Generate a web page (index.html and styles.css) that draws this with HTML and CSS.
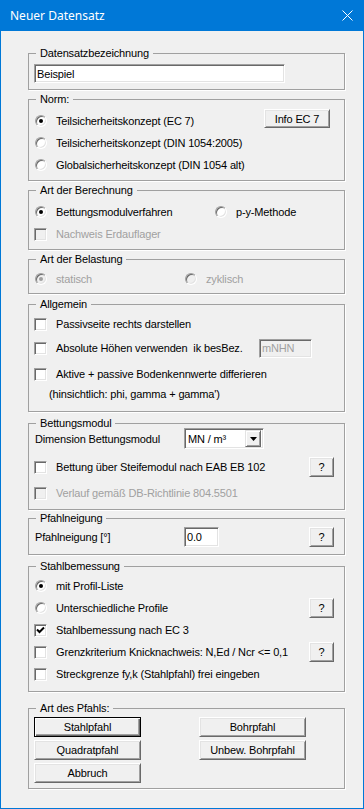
FILE: index.html
```html
<!DOCTYPE html>
<html lang="de">
<head>
  <meta charset="UTF-8">
  <title>Neuer Datensatz</title>
  <link rel="stylesheet" href="styles.css">
</head>
<body>
  <div class="window">
    <div class="titlebar">
      <span class="title">Neuer Datensatz</span>
      <svg class="close" width="11" height="11" viewBox="0 0 11 11"><path d="M0.5 0.5L10.5 10.5M10.5 0.5L0.5 10.5" stroke="#fff" stroke-width="1"/></svg>
    </div>

    <div class="client">
      <!-- Bezeichnung -->
      <fieldset class="grp grp-name">
        <legend>Datensatzbezeichnung</legend>
        <div class="body">
          <input class="field field-name" type="text" value="Beispiel">
        </div>
      </fieldset>

      <!-- Norm -->
      <fieldset class="grp grp-norm">
        <legend>Norm:</legend>
        <div class="body">
          <div class="row">
            <span class="opt"><span class="radio on"></span>Teilsicherheitskonzept (EC 7)</span>
            <button class="btn btn-info">Info EC 7</button>
          </div>
          <div class="row"><span class="opt"><span class="radio"></span>Teilsicherheitskonzept (DIN 1054:2005)</span></div>
          <div class="row"><span class="opt"><span class="radio"></span>Globalsicherheitskonzept (DIN 1054 alt)</span></div>
        </div>
      </fieldset>

      <!-- Berechnung -->
      <fieldset class="grp grp-ber">
        <legend>Art der Berechnung</legend>
        <div class="body">
          <div class="row">
            <span class="opt col-ber"><span class="radio on"></span>Bettungsmodulverfahren</span>
            <span class="opt"><span class="radio"></span>p-y-Methode</span>
          </div>
          <div class="row"><span class="opt off"><span class="chk"></span>Nachweis Erdauflager</span></div>
        </div>
      </fieldset>

      <!-- Belastung -->
      <fieldset class="grp grp-bel">
        <legend>Art der Belastung</legend>
        <div class="body">
          <div class="row">
            <span class="opt off col-bel"><span class="radio on"></span>statisch</span>
            <span class="opt off"><span class="radio"></span>zyklisch</span>
          </div>
        </div>
      </fieldset>

      <!-- Allgemein -->
      <fieldset class="grp grp-allg">
        <legend>Allgemein</legend>
        <div class="body">
          <div class="row"><span class="opt"><span class="chk"></span>Passivseite rechts darstellen</span></div>
          <div class="row row-26">
            <span class="opt col-abs"><span class="chk"></span>Absolute Höhen verwenden&nbsp; ik besBez.</span>
            <input class="field field-nhn" type="text" value="mNHN" disabled>
          </div>
          <div class="row row-26"><span class="opt"><span class="chk"></span>Aktive + passive Bodenkennwerte differieren</span></div>
          <div class="row row-14"><span class="note">(hinsichtlich: phi, gamma + gamma')</span></div>
        </div>
      </fieldset>

      <!-- Bettungsmodul -->
      <fieldset class="grp grp-bett">
        <legend>Bettungsmodul</legend>
        <div class="body">
          <div class="row row-21">
            <span class="lbl">Dimension Bettungsmodul</span>
            <div class="combo">
              <span class="combo-text">MN / m³</span>
              <span class="drop"><svg width="7" height="4" viewBox="0 0 7 4"><path d="M0 0H7L3.5 4Z" fill="#000"/></svg></span>
            </div>
          </div>
          <div class="row row-gap">
            <span class="opt"><span class="chk"></span>Bettung über Steifemodul nach EAB EB 102</span>
            <button class="btn btn-q">?</button>
          </div>
          <div class="row row-gap2"><span class="opt off"><span class="chk"></span>Verlauf gemäß DB-Richtlinie 804.5501</span></div>
        </div>
      </fieldset>

      <!-- Pfahlneigung -->
      <fieldset class="grp grp-pfahl">
        <legend>Pfahlneigung</legend>
        <div class="body">
          <div class="row row-20">
            <span class="lbl">Pfahlneigung [°]</span>
            <input class="field field-neig" type="text" value="0.0">
            <button class="btn btn-q">?</button>
          </div>
        </div>
      </fieldset>

      <!-- Stahlbemessung -->
      <fieldset class="grp grp-stahl">
        <legend>Stahlbemessung</legend>
        <div class="body">
          <div class="row"><span class="opt"><span class="radio on"></span>mit Profil-Liste</span></div>
          <div class="row">
            <span class="opt"><span class="radio"></span>Unterschiedliche Profile</span>
            <button class="btn btn-q">?</button>
          </div>
          <div class="row">
            <span class="opt"><span class="chk"><svg width="9" height="9" viewBox="0 0 9 9"><path d="M1 3.5L3.5 6L8 1.5" fill="none" stroke="#000" stroke-width="2"/></svg></span>Stahlbemessung nach EC 3</span>
          </div>
          <div class="row">
            <span class="opt"><span class="chk"></span>Grenzkriterium Knicknachweis: N,Ed / Ncr &lt;= 0,1</span>
            <button class="btn btn-q">?</button>
          </div>
          <div class="row"><span class="opt"><span class="chk"></span>Streckgrenze fy,k (Stahlpfahl) frei eingeben</span></div>
        </div>
      </fieldset>

      <!-- Art des Pfahls -->
      <fieldset class="grp grp-art">
        <legend>Art des Pfahls:</legend>
        <div class="body">
          <div class="btn-grid">
            <button class="btn btn-big default">Stahlpfahl</button>
            <button class="btn btn-big">Bohrpfahl</button>
            <button class="btn btn-big">Quadratpfahl</button>
            <button class="btn btn-big">Unbew. Bohrpfahl</button>
            <button class="btn btn-big">Abbruch</button>
          </div>
        </div>
      </fieldset>
    </div>
  </div>
</body>
</html>
```

FILE: styles.css
```css
body {
  margin: 0;
  font-family: "Liberation Sans", Arial, sans-serif;
  font-size: 11px;
  letter-spacing: -0.15px;
  color: #000;
}
.window {
  width: 364px;
  height: 809px;
  box-sizing: border-box;
  border: 1px solid #0078d7;
  border-top: 0;
  background: #f0f0f0;
}
.titlebar {
  height: 31px;
  background: #0078d7;
  display: flex;
  align-items: center;
  justify-content: space-between;
  padding: 0 10px 0 9px;
}
.title {
  font-family: "Noto Sans", "Open Sans", sans-serif;
  font-size: 12px;
  letter-spacing: 0;
  color: #fff;
  margin-top: -1px;
}
.client {
  padding: 18px 0 0 27px;
}

/* Gruppenrahmen */
.grp {
  margin: 0;
  padding: 0;
  min-width: 0;
  width: 317px;
  box-sizing: border-box;
  border: 1px solid #a0a0a0;
  box-shadow: 1px 1px 0 #fff;
}
.grp legend {
  padding: 0 4px;
  margin-left: 7px;
  line-height: 9px;
}
.body {
  display: flex;
  flex-direction: column;
  padding: 4px 10px 0 5px;
}
.grp-name { height: 41px; }
.grp-name .body { padding-top: 6px; }
.grp-norm { height: 86px; margin-top: 5px; }
.grp-norm .body { padding-top: 6px; }
.grp-ber { height: 64px; margin-top: 5px; }
.grp-ber .body { padding-top: 6px; }
.grp-bel { height: 39px; margin-top: 5px; }
.grp-allg { height: 112px; margin-top: 6px; }
.grp-bett { height: 91px; margin-top: 7px; }
.grp-bett .body { padding-top: 0; }
.grp-pfahl { height: 41px; margin-top: 4px; }
.grp-stahl { height: 130px; margin-top: 7px; }
.grp-art { height: 85px; margin-top: 12px; }

/* Zeilen */
.row {
  display: flex;
  align-items: center;
  height: 22px;
}
.row-26 { height: 26px; }
.row-14 { height: 14px; }
.row-21 { height: 21px; }
.row-20 { height: 20px; }
.row-gap { margin-top: 6px; height: 24px; }
.row-gap2 { margin-top: 3px; }
.opt {
  display: flex;
  align-items: center;
  white-space: nowrap;
}
.opt.off { color: #a0a0a0; }
.col-ber { width: 180px; }
.col-bel { width: 150px; }
.col-abs { width: 225px; }
.lbl {
  width: 150px;
  padding-left: 1px;
  box-sizing: border-box;
}
.note { padding-left: 15px; }

/* Optionsfeld + Kontrollkästchen */
.radio, .chk {
  box-sizing: border-box;
  flex: none;
  background: #fff;
  border: 1px solid;
  border-color: #a0a0a0 #fff #fff #a0a0a0;
  box-shadow: inset 1px 1px 0 #696969, inset -1px -1px 0 #e3e3e3;
  position: relative;
}
.radio {
  width: 12px;
  height: 12px;
  border-radius: 50%;
  margin: 0 9px 0 1px;
}
.radio.on::after {
  content: "";
  position: absolute;
  left: 3px;
  top: 3px;
  width: 4px;
  height: 4px;
  border-radius: 50%;
  background: #000;
}
.chk {
  width: 13px;
  height: 13px;
  margin-right: 9px;
  display: flex;
  align-items: center;
  justify-content: center;
}
.off .radio, .off .chk { background: #f0f0f0; }
.off .radio.on::after { background: #a0a0a0; }

/* Eingabefelder */
.field {
  box-sizing: border-box;
  margin: 0;
  padding: 0 0 0 2px;
  font: inherit;
  letter-spacing: inherit;
  color: #000;
  background: #fff;
  border: 1px solid;
  border-color: #a0a0a0 #fff #fff #a0a0a0;
  box-shadow: inset 1px 1px 0 #696969, inset -1px -1px 0 #e3e3e3;
  outline: none;
}
.field-name { width: 251px; height: 19px; }
.field-nhn {
  width: 53px;
  height: 19px;
  background: #f0f0f0;
  color: #a0a0a0;
}
.field-neig { width: 35px; height: 20px; }

.combo {
  box-sizing: border-box;
  width: 80px;
  height: 21px;
  display: flex;
  align-items: center;
  background: #fff;
  border: 1px solid;
  border-color: #a0a0a0 #fff #fff #a0a0a0;
  box-shadow: inset 1px 1px 0 #696969, inset -1px -1px 0 #e3e3e3;
  padding: 2px 2px 2px 2px;
}
.combo-text { flex: 1; padding-left: 1px; }
.drop {
  box-sizing: border-box;
  width: 16px;
  height: 17px;
  display: flex;
  align-items: center;
  justify-content: center;
  background: #f0f0f0;
  border: 1px solid;
  border-color: #e3e3e3 #696969 #696969 #e3e3e3;
  box-shadow: inset 1px 1px 0 #fff, inset -1px -1px 0 #a0a0a0;
}

/* Schaltflächen */
.btn {
  box-sizing: border-box;
  margin: 0;
  padding: 0;
  font: inherit;
  letter-spacing: inherit;
  color: #000;
  background: #f0f0f0;
  border: 1px solid;
  border-color: #fff #696969 #696969 #fff;
  box-shadow: inset 1px 1px 0 #e3e3e3, inset -1px -1px 0 #a0a0a0;
}
.btn-info {
  width: 66px;
  height: 19px;
  margin: -1px 4px 0 auto;
  align-self: flex-start;
}
.btn-q {
  width: 25px;
  height: 20px;
  margin-left: auto;
}
.field-neig + .btn-q { margin-left: auto; }
.btn-grid {
  display: grid;
  grid-template-columns: 107px 107px;
  column-gap: 58px;
  row-gap: 3px;
}
.btn-big { height: 20px; }
.btn-big.default {
  border-color: #000;
  box-shadow: inset 1px 1px 0 #fff, inset -1px -1px 0 #696969, inset -2px -2px 0 #a0a0a0;
}
```
